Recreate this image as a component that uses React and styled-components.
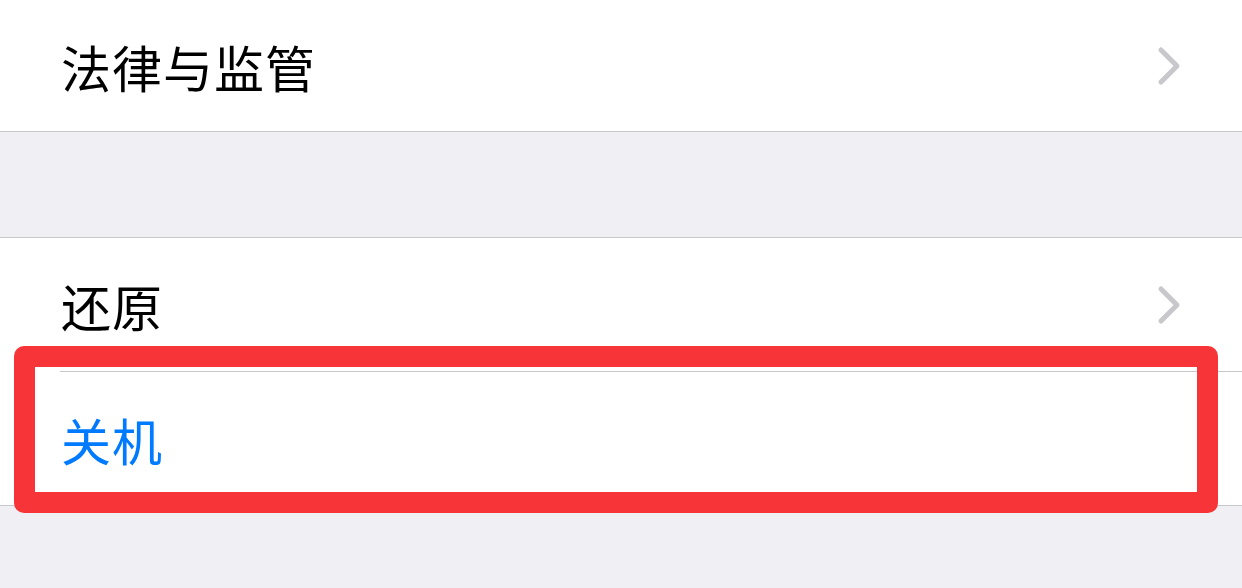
import React from 'react';
import styled, { createGlobalStyle } from 'styled-components';

const GlobalStyle = createGlobalStyle`
  html, body {
    margin: 0;
    padding: 0;
    background: #efeff4;
  }
  body {
    font-family: "Noto Sans CJK SC", "Noto Sans", sans-serif;
    -webkit-font-smoothing: antialiased;
  }
`;

const Page = styled.div`
  position: relative;
  width: 1242px;
  height: 588px;
  overflow: hidden;
  background: #efeff4;
`;

const Group = styled.div`
  background: #fff;
  border-top: ${(p) => (p.$top ? '1px solid #c8c7cc' : 'none')};
  border-bottom: 1px solid #c8c7cc;
`;

const Gap = styled.div`
  height: 105px;
`;

const Row = styled.div`
  display: flex;
  align-items: center;
  justify-content: space-between;
  height: ${(p) => p.$height || 133}px;
  padding: 0 62px 0 61px;
  box-sizing: border-box;
`;

const Divider = styled.div`
  height: 1px;
  margin-left: 60px;
  background: #c8c7cc;
`;

const Label = styled.span`
  font-size: 50px;
  line-height: 1;
  color: ${(p) => (p.$action ? '#007aff' : '#000')};
  letter-spacing: 1px;
`;

const Chevron = styled.svg`
  width: 24px;
  height: 40px;
  flex-shrink: 0;
  margin-right: -1px;
`;

const Highlight = styled.div`
  position: absolute;
  left: 14px;
  top: 346px;
  width: 1204px;
  height: 167px;
  box-sizing: border-box;
  border: 21px solid #f73538;
  border-radius: 10px;
  pointer-events: none;
`;

const Arrow = () => (
  <Chevron viewBox="0 0 24 40">
    <path
      d="M4 4 L20 20 L4 36"
      fill="none"
      stroke="#c7c7cc"
      strokeWidth="5"
      strokeLinecap="round"
      strokeLinejoin="round"
    />
  </Chevron>
);

export default function App() {
  return (
    <Page>
      <GlobalStyle />
      <Group>
        <Row $height={131}>
          <Label>法律与监管</Label>
          <Arrow />
        </Row>
      </Group>
      <Gap />
      <Group $top>
        <Row>
          <Label>还原</Label>
          <Arrow />
        </Row>
        <Divider />
        <Row>
          <Label $action>关机</Label>
        </Row>
      </Group>
      <Highlight />
    </Page>
  );
}
